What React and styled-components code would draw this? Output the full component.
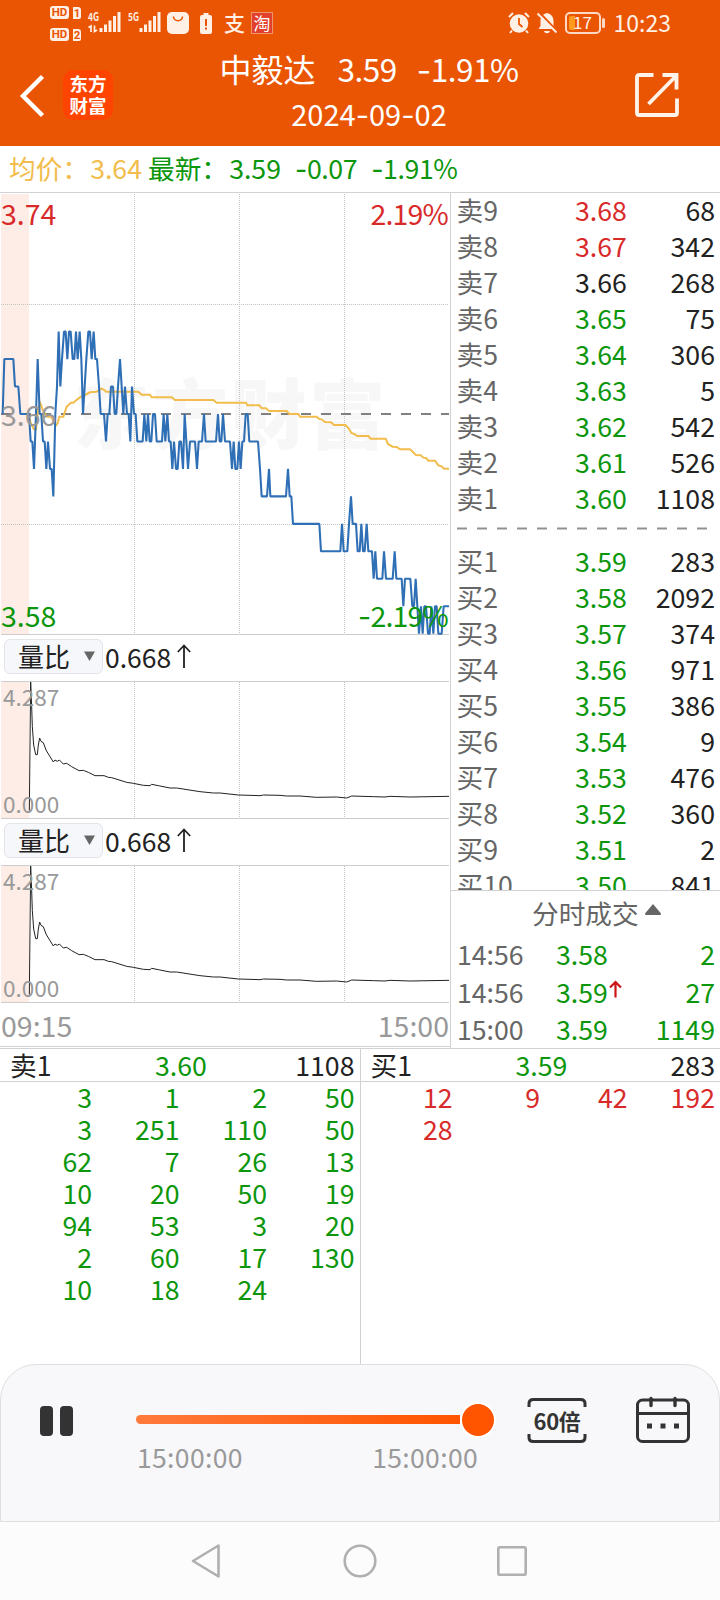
import styled, { createGlobalStyle } from "styled-components";

const GREEN = "#0c960c";
const RED = "#d92a2a";
const DARK = "#222222";
const GRAY = "#666666";
const LINE = "#d0d2d6";

const asks = [
  ["卖9", "3.68", "68", RED],
  ["卖8", "3.67", "342", RED],
  ["卖7", "3.66", "268", DARK],
  ["卖6", "3.65", "75", GREEN],
  ["卖5", "3.64", "306", GREEN],
  ["卖4", "3.63", "5", GREEN],
  ["卖3", "3.62", "542", GREEN],
  ["卖2", "3.61", "526", GREEN],
  ["卖1", "3.60", "1108", GREEN],
];

const bids = [
  ["买1", "3.59", "283", GREEN],
  ["买2", "3.58", "2092", GREEN],
  ["买3", "3.57", "374", GREEN],
  ["买4", "3.56", "971", GREEN],
  ["买5", "3.55", "386", GREEN],
  ["买6", "3.54", "9", GREEN],
  ["买7", "3.53", "476", GREEN],
  ["买8", "3.52", "360", GREEN],
  ["买9", "3.51", "2", GREEN],
  ["买10", "3.50", "841", GREEN],
];

const trades = [
  { time: "14:56", price: "3.58", volume: "2" },
  { time: "14:56", price: "3.59", volume: "27", up: true },
  { time: "15:00", price: "3.59", volume: "1149" },
];

const sellQueue = [
  "3", "1", "2", "50",
  "3", "251", "110", "50",
  "62", "7", "26", "13",
  "10", "20", "50", "19",
  "94", "53", "3", "20",
  "2", "60", "17", "130",
  "10", "18", "24",
];

const buyQueue = ["12", "9", "42", "192", "28"];

// x : last two digits of the price
const priceSeries = `8:66 13:68 40:68 45:67 55:67 61:66 87:66 92:65 97:65 102:64 108:66 113:68 119:66 124:66
129:65 134:65 139:64 144:65 150:64 155:64 160:63 166:66 171:67 176:69 181:67 186:68 192:69 197:69 202:68 207:69
212:69 218:68 223:68 228:69 233:68 239:69 244:68 249:66 254:67 259:68 265:69 270:69 275:68 281:69 286:68 291:68
297:67 302:66 312:66 318:65 323:66 328:66 333:67 339:67 344:66 349:66 354:67 360:68 365:67 370:66 375:67 381:66
386:66 391:65 396:67 402:66 407:66 412:65 428:65 433:66 439:65 444:66 449:65 454:65 459:66 465:66 470:65 486:65
491:66 496:65 502:66 507:65 512:65 517:64 522:65 528:64 533:64 538:65 543:65 549:64 554:66 559:65 564:64 570:65
585:65 591:64 596:65 606:65 612:66 617:65 648:65 654:66 659:65 664:65 669:66 675:65 690:65 696:64 701:65 706:64
712:64 717:65 722:64 727:65 732:65 737:66 743:66 748:65 774:65 780:64 785:63 801:63 807:64 811:63 858:63 864:64
869:63 874:63 879:62 958:62 963:61 1021:61 1026:62 1031:61 1042:61 1047:62 1053:63 1058:62 1068:62 1073:61
1079:61 1084:62 1089:61 1094:61 1100:62 1105:61 1116:61 1121:60 1126:61 1131:60 1147:60 1152:61 1158:60 1178:60
1184:61 1189:60 1205:60 1210:59 1215:60 1231:60 1237:59 1242:59 1247:60 1252:59 1257:58 1263:59 1268:58 1273:59
1278:59 1284:58 1289:58 1294:59 1300:58 1305:59 1310:59 1315:58 1325:58 1331:59 1347:59`;

const pricePoints = priceSeries
  .split(/\s+/)
  .map((p) => {
    const [x, cents] = p.split(":").map(Number);
    return `${x},${672 + (66 - cents) * 82.4}`;
  })
  .join(" ");

const averagePoints = `87,672 92,700 102,718 108,718 115,655 121,640 130,665 140,680 155,682 160,695 168,706 173,700
178,680 190,680 195,665 200,650 213,638 220,638 232,628 240,622 255,615 270,607 290,605 298,600 305,596 313,600
318,605 415,605 425,614 450,614 455,622 515,622 525,630 640,630 650,638 738,638 742,646 778,646 785,655 798,655
807,663 860,663 868,672 895,672 900,680 950,680 958,687 965,688 975,696 993,697 1002,705 1036,705 1046,715
1054,729 1065,733 1072,738 1105,738 1112,746 1157,746 1164,762 1178,770 1190,771 1200,778 1230,778 1248,795
1262,796 1270,803 1278,804 1285,812 1305,812 1315,826 1325,829 1332,836 1347,836`;

const ratioPoints = `88,542 92,156 95,230 97,290 101,345 107,374 112,374 115,345 119,324 123,334 130,338 138,360
150,380 160,396 165,390 172,394 178,390 190,402 200,400 215,410 237,422 250,421 265,427 285,437 312,437 325,442
335,443 380,457 400,460 430,466 450,467 455,463 475,467 510,474 530,474 600,485 640,489 660,489 715,495 780,497
790,495 840,496 860,498 900,498 950,502 1010,501 1040,504 1055,498 1120,500 1155,501 1170,499 1230,501 1347,499`;

const gridX = [403.5, 718.5, 1033.5];

const Signal = ({ label, data }) => (
  <svg width="34" height="24" viewBox="0 0 34 24">
    <text x="0" y="9.500" fontSize="11" fontWeight="700" fill="#fff0e6" textLength="11" lengthAdjust="spacingAndGlyphs">
      {label}
    </text>
    <g fill="#fff0e6">
      <rect x="11.500" y="17" width="3" height="4" />
      <rect x="16" y="13.500" width="3" height="7.500" />
      <rect x="20.500" y="9.500" width="3" height="11.500" />
      <rect x="25" y="5" width="3" height="16" />
      <rect x="29.500" y="1" width="3" height="20" />
    </g>
    {data && <path d="M.5 16.500l2.500-1.500v6M6.500 14.500v6l2.500-1.500" fill="none" stroke="#fff0e6" strokeWidth="1.700" />}
  </svg>
);

const StatusIcons = () => (
  <StatusLeft>
    <HdGroup>
      {["1", "2"].map((n) => (
        <HdRow key={n}>
          <HdBadge>HD</HdBadge>
          <HdNumber>{n}</HdNumber>
        </HdRow>
      ))}
    </HdGroup>
    <Signal label="4G" data />
    <SecondSignal>
      <Signal label="5G" />
    </SecondSignal>
    <svg width="22" height="22" viewBox="0 0 22 22">
      <rect width="22" height="22" rx="5" fill="#fff0e6" />
      <path d="M6.500 4.500a4.500 4.200 0 0 0 9 0" fill="none" stroke="#ea5504" strokeWidth="1.600" />
    </svg>
    <BatteryAlert width="12" height="21" viewBox="0 0 12 21">
      <path d="M3.500 0h5v2H10a2 2 0 0 1 2 2v15a2 2 0 0 1-2 2H2a2 2 0 0 1-2-2V4a2 2 0 0 1 2-2h1.500z" fill="#fff0e6" />
      <path d="M6 6v7M6 14.500v2" stroke="#ea5504" strokeWidth="2" />
    </BatteryAlert>
    <PayMark>支</PayMark>
    <TaoMark>淘</TaoMark>
  </StatusLeft>
);

const StatusRightIcons = () => (
  <StatusRight>
    <svg width="22" height="22" viewBox="0 0 22 22">
      <circle cx="11" cy="11.500" r="9.300" fill="#fff0e6" />
      <path d="M1 5l4-4M21 5l-4-4M4 18.500l-2 2.500M18 18.500l2 2.500" stroke="#fff0e6" strokeWidth="2" />
      <path d="M11 6v6l3.500 3" fill="none" stroke="#ea5504" strokeWidth="1.800" />
    </svg>
    <BellOff width="20" height="22" viewBox="0 0 20 22">
      <path d="M10 1c4 1 6.500 3.500 6.500 8v5l2 3H1.500l2-3V9C3.500 4.500 6 2 10 1zM7 19h6c-.5 3-5.500 3-6 0z" fill="#fff0e6" />
      <path d="M2 0l18 19" stroke="#ea5504" strokeWidth="2" />
      <path d="M.5 1.500l19 19" stroke="#fff0e6" strokeWidth="1.800" />
    </BellOff>
    <BatteryShell>
      <BatteryFill />
      <span>17</span>
    </BatteryShell>
    <BatteryTip />
    <Clock>10:23</Clock>
  </StatusRight>
);

const RatioChart = () => (
  <>
    <IndicatorBar>
      <IndicatorPill>
        量比
        <svg width="11" height="10" viewBox="0 0 11 10">
          <path d="M0 .5h11L5.500 10z" fill="#666" />
        </svg>
      </IndicatorPill>
      0.668
      <UpArrow width="14" height="25" viewBox="0 0 14 25">
        <path d="M7 24V1.500M.8 8L7 1.500 13.200 8" fill="none" stroke="#222" strokeWidth="1.800" />
      </UpArrow>
    </IndicatorBar>
    <RatioBox>
      <Plot width="450" height="138" viewBox="0 153 1350 414">
        <rect x="3" y="154" width="84" height="411" fill="#fdede6" />
        <path d="M3 154.500H1347M3 565.500H1347" stroke="#cdcdcd" strokeWidth="3" />
        {gridX.map((x) => (
          <path key={x} d={`M${x} 156V565`} stroke="#c4c4c4" strokeWidth="3" strokeDasharray="3 3" />
        ))}
        <polyline points={ratioPoints} fill="none" stroke="#222" strokeWidth="3" />
      </Plot>
      <SmallLabel $top="2px">4.287</SmallLabel>
      <SmallLabel $top="109px">0.000</SmallLabel>
    </RatioBox>
  </>
);

const BookRows = ({ rows }) =>
  rows.map(([name, price, volume, color]) => (
    <BookRow key={name}>
      <BookName>{name}</BookName>
      <Price $color={color}>{price}</Price>
      <Volume>{volume}</Volume>
    </BookRow>
  ));

const Queue = ({ name, price, volume, items, color }) => (
  <QueueSide>
    <QueueHead>
      <span>{name}</span>
      <Price $color={GREEN}>{price}</Price>
      <Volume>{volume}</Volume>
    </QueueHead>
    <QueueGrid $color={color}>
      {items.map((v, i) => (
        <span key={i}>{v}</span>
      ))}
    </QueueGrid>
  </QueueSide>
);

const App = () => (
  <Screen>
    <GlobalStyle />
    <Header>
      <StatusBar>
        <StatusIcons />
        <StatusRightIcons />
      </StatusBar>
      <TitleBar>
        <BackIcon width="24" height="42" viewBox="0 0 24 42">
          <path d="M22.500 1.500L3 21l19.500 19.500" fill="none" stroke="#fff" strokeWidth="4.400" />
        </BackIcon>
        <Logo>
          <span>东方</span>
          <span>财富</span>
        </Logo>
        <Titles>
          <Title>
            <TitleName>中毅达</TitleName>
            <span>3.59</span>
            <span>
              <Minus>-</Minus>1.91%
            </span>
          </Title>
          <DateText>
            2024<Minus>-</Minus>09<Minus>-</Minus>02
          </DateText>
        </Titles>
        <svg width="44" height="44" viewBox="0 0 44 44">
          <path d="M18.500 2H4a2 2 0 0 0-2 2v36a2 2 0 0 0 2 2h36a2 2 0 0 0 2-2V25.500" fill="none" stroke="#fff3ea" strokeWidth="3.800" />
          <path d="M27.500 2H41.500V16.500M41 3L13.500 31" fill="none" stroke="#fff3ea" strokeWidth="3.800" />
        </svg>
      </TitleBar>
    </Header>

    <Summary>
      <Average>
        均价：<b>3.64</b>
      </Average>
      <Latest>
        最新：<b>3.59</b>
      </Latest>
      <Change>
        <Minus>-</Minus>0.07
      </Change>
      <Change>
        <Minus>-</Minus>1.91%
      </Change>
    </Summary>

    <Main>
      <Charts>
        <PriceBox>
          <Plot width="450" height="442" viewBox="0 9 1350 1326">
            <rect x="3" y="12" width="84" height="1321" fill="#fdede6" />
            <text x="220" y="760" fontSize="228" fontWeight="900" fill="#f7f7f7" textLength="936">
              东方财富
            </text>
            {gridX.map((x) => (
              <path key={x} d={`M${x} 12V1332`} stroke="#c4c4c4" strokeWidth="3" strokeDasharray="3 3" />
            ))}
            <path d="M3 343.500H1347M3 1003.500H1347" stroke="#c4c4c4" strokeWidth="3" strokeDasharray="3 3" />
            <path d="M3 1333.500H1347" stroke="#cdcdcd" strokeWidth="3" />
            <path d="M3 672H1347" stroke="#808080" strokeWidth="5.500" strokeDasharray="30 30" />
            <polyline points={averagePoints} fill="none" stroke="#f2bd4c" strokeWidth="6" />
            <polyline points={pricePoints} fill="none" stroke="#2f6fb5" strokeWidth="6.200" strokeLinejoin="bevel" />
          </Plot>
          <AxisLabel $top="0" $color={RED}>3.74</AxisLabel>
          <AxisLabel $top="0" $color={RED} $right>2.19%</AxisLabel>
          <AxisLabel $top="201px" $color="#999">3.66</AxisLabel>
          <AxisLabel $top="402px" $color={GREEN}>3.58</AxisLabel>
          <AxisLabel $top="402px" $color={GREEN} $right>
            <Minus>-</Minus>2.19%
          </AxisLabel>
        </PriceBox>
        <RatioChart />
        <RatioChart />
        <TimeAxis>
          <span>09:15</span>
          <span>15:00</span>
        </TimeAxis>
      </Charts>

      <Side>
        <Book>
          <BookRows rows={asks} />
          <BookDivider width="250" height="27" viewBox="0 0 250 27">
            <path d="M0 11.500H250" stroke="#909090" strokeWidth="2" strokeDasharray="10 10" />
          </BookDivider>
          <BookRows rows={bids} />
        </Book>
        <Trades>
          <TradesTitle>
            分时成交
            <svg width="16" height="17" viewBox="0 0 16 17">
              <path d="M8 0l8 9.500q0 1.500-1 1.500H1q-1 0-1-1.500z" fill="#666" />
            </svg>
          </TradesTitle>
          {trades.map((t, i) => (
            <TradeRow key={i}>
              <BookName>{t.time}</BookName>
              <Price $color={GREEN}>
                {t.price}
                {t.up && (
                  <TradeArrow width="13" height="18" viewBox="0 0 13 18">
                    <path d="M6.500 17.500V2M1 7.500l5.500-5.500L12 7.500" fill="none" stroke="#cc1515" strokeWidth="2.200" />
                  </TradeArrow>
                )}
              </Price>
              <Volume $color={GREEN}>{t.volume}</Volume>
            </TradeRow>
          ))}
        </Trades>
      </Side>
    </Main>

    <Queues>
      <Queue name="卖1" price="3.60" volume="1108" items={sellQueue} color={GREEN} />
      <Queue name="买1" price="3.59" volume="283" items={buyQueue} color={RED} />
    </Queues>

    <Player>
      <PauseButton>
        <i />
        <i />
      </PauseButton>
      <Progress>
        <Track>
          <Thumb />
        </Track>
        <ProgressTimes>
          <span>15:00:00</span>
          <span>15:00:00</span>
        </ProgressTimes>
      </Progress>
      <SpeedButton>
        <svg width="60" height="10" viewBox="0 0 60 10">
          <path d="M2 10V6.500q0-4 4.500-4h47q4.500 0 4.500 4V10" fill="none" stroke="#333" strokeWidth="3" />
        </svg>
        <span>60倍</span>
        <svg width="60" height="10" viewBox="0 0 60 10">
          <path d="M2 0v3.500q0 4 4.500 4h47q4.500 0 4.500-4V0" fill="none" stroke="#333" strokeWidth="3" />
        </svg>
      </SpeedButton>
      <CalendarIcon width="56" height="50" viewBox="0 0 56 50">
        <rect x="2.500" y="4" width="51" height="41.500" rx="5" fill="none" stroke="#333" strokeWidth="3" />
        <path d="M2.500 17.500h51" stroke="#333" strokeWidth="3" />
        <path d="M16 2.500v7M40 2.500v7" stroke="#333" strokeWidth="3.400" strokeLinecap="round" />
        <path d="M12 30h5M25.500 30h5M39 30h5" stroke="#333" strokeWidth="5" />
      </CalendarIcon>
    </Player>

    <NavBar>
      <svg width="30" height="36" viewBox="0 0 30 36">
        <path d="M28.500 2.500v31L3 18z" fill="none" stroke="#b0b0b0" strokeWidth="2.600" strokeLinejoin="round" />
      </svg>
      <svg width="34" height="34" viewBox="0 0 34 34">
        <circle cx="18" cy="17" r="15.300" fill="none" stroke="#b0b0b0" strokeWidth="2.600" />
      </svg>
      <svg width="30" height="30" viewBox="0 0 30 30">
        <rect x="1.300" y="1.300" width="27.400" height="27.400" rx="1.500" fill="none" stroke="#b0b0b0" strokeWidth="2.600" />
      </svg>
    </NavBar>
  </Screen>
);

const GlobalStyle = createGlobalStyle`
  * {
    box-sizing: border-box;
  }
  body {
    margin: 0;
    background: #fff;
    font-family: "Noto Sans CJK SC", sans-serif;
  }
  svg {
    display: block;
    flex-shrink: 0;
    overflow: visible;
  }
  b {
    font-weight: 400;
  }
`;

const Screen = styled.div`
  display: flex;
  flex-direction: column;
  width: 720px;
  height: 1600px;
  overflow: hidden;
  color: ${DARK};
  font-size: 26.7px;
`;

const Minus = styled.span`
  display: inline-block;
  font-family: Inter, sans-serif;
  line-height: 1;
`;

const Header = styled.header`
  height: 146px;
  background: #ea5504;
  color: #fff;
  flex-shrink: 0;
`;

const StatusBar = styled.div`
  display: flex;
  justify-content: space-between;
  height: 46px;
  padding: 0 49px;
  color: #fff0e6;
`;

const StatusLeft = styled.div`
  display: flex;
  align-items: center;
`;

const HdGroup = styled.div`
  display: flex;
  flex-direction: column;
  gap: 9px;
  width: 38px;
  margin: 1px 0 0 1px;
`;

const HdRow = styled.div`
  display: flex;
  align-items: center;
  gap: 4px;
  font-size: 11.5px;
  font-weight: 700;
  font-family: Roboto, sans-serif;
  color: #ea5504;
`;

const HdBadge = styled.span`
  width: 19px;
  height: 13px;
  border-radius: 3px;
  background: #fff0e6;
  line-height: 13px;
  text-align: center;
`;

const HdNumber = styled.span`
  width: 8px;
  height: 12px;
  border-radius: 0 3px 2px 0;
  background: #fff0e6;
  line-height: 12px;
  text-align: center;
`;

const SecondSignal = styled.div`
  margin: 0 5px 0 6px;
`;

const BatteryAlert = styled.svg`
  margin-left: 11px;
`;

const PayMark = styled.span`
  margin: -2px 0 0 12px;
  font-size: 21px;
  line-height: 24px;
  font-weight: 500;
`;

const TaoMark = styled.span`
  width: 22px;
  height: 22px;
  margin-left: 6px;
  background: #e0402c;
  border: 1px solid #f0946c;
  color: #fff;
  font-size: 17px;
  line-height: 19px;
  text-align: center;
`;

const StatusRight = styled.div`
  display: flex;
  align-items: center;
`;

const BellOff = styled.svg`
  margin: 0 8px 0 7px;
`;

const BatteryShell = styled.div`
  position: relative;
  width: 36px;
  height: 22px;
  border: 2px solid #fdd9c4;
  border-radius: 5px;
  font-size: 17px;
  line-height: 16px;
  text-align: center;

  span {
    position: relative;
  }
`;

const BatteryFill = styled.i`
  position: absolute;
  left: 2px;
  top: 2px;
  width: 6px;
  height: 14px;
  border-radius: 2px 0 0 2px;
  background: #ff9a1c;
`;

const BatteryTip = styled.i`
  width: 3px;
  height: 10px;
  margin-left: 1px;
  border-radius: 2px;
  background: #fdd9c4;
`;

const Clock = styled.span`
  margin-left: 9px;
  font-size: 23px;
  line-height: 40px;
  padding-bottom: 2px;
`;

const TitleBar = styled.div`
  display: flex;
  align-items: center;
  height: 98px;
  padding: 0 41px 0 20px;
`;

const BackIcon = styled.svg`
  margin-top: 1px;
`;

const Logo = styled.div`
  display: flex;
  flex-direction: column;
  align-items: center;
  width: 50px;
  height: 50px;
  margin-left: 19px;
  padding-top: 2px;
  border-radius: 10px;
  background: #ff4400;
  font-size: 18.5px;
  line-height: 22px;
  font-weight: 700;
`;

const Titles = styled.div`
  display: flex;
  flex: 1;
  flex-direction: column;
  align-items: center;
  padding: 0 10px 9px 0;
`;

const Title = styled.div`
  display: flex;
  gap: 20px;
  font-size: 31.5px;
  line-height: 45px;
  letter-spacing: -0.5px;
`;

const TitleName = styled.span`
  margin-right: 2px;
  font-size: 32px;
  letter-spacing: 0;
`;

const DateText = styled.div`
  font-size: 29px;
  line-height: 44px;
`;

const Summary = styled.div`
  display: flex;
  height: 47px;
  padding-left: 9px;
  border-bottom: 1px solid ${LINE};
  line-height: 44px;
  flex-shrink: 0;
  color: ${GREEN};
`;

const Average = styled.span`
  display: flex;
  justify-content: space-between;
  width: 133px;
  color: #f2bd4c;
`;

const Latest = styled.span`
  display: flex;
  justify-content: space-between;
  width: 133px;
  margin-left: 6px;
`;

const Change = styled.span`
  margin-left: 14px;
  letter-spacing: -0.4px;
`;

const Main = styled.main`
  display: flex;
  height: 856px;
  border-bottom: 1px solid ${LINE};
  flex-shrink: 0;
`;

const Charts = styled.section`
  width: 450px;
`;

const Plot = styled.svg`
  display: block;
  overflow: hidden;
`;

const PriceBox = styled.div`
  position: relative;
  height: 442px;
`;

const AxisLabel = styled.span`
  position: absolute;
  top: ${({ $top }) => $top};
  ${({ $right }) => ($right ? "right: 2px; letter-spacing: -0.8px;" : "left: 1px;")}
  color: ${({ $color }) => $color};
  font-size: 28.5px;
  line-height: 40px;
`;

const IndicatorBar = styled.div`
  display: flex;
  align-items: center;
  height: 46px;
  padding: 0 0 3px 4px;
  font-size: 26.5px;
  line-height: 39px;
`;

const IndicatorPill = styled.div`
  display: flex;
  align-items: center;
  justify-content: space-between;
  width: 99px;
  height: 35px;
  margin-right: 2px;
  padding: 0 7px 1px 13px;
  border: 1px solid #e2e4e8;
  border-radius: 6px;
  background: #f6f7fa;
  font-size: 26px;
  line-height: 30px;
`;

const UpArrow = styled.svg`
  margin-left: 6px;
`;

const RatioBox = styled.div`
  position: relative;
  height: 138px;
`;

const SmallLabel = styled.span`
  position: absolute;
  top: ${({ $top }) => $top};
  left: 3px;
  color: #999;
  font-size: 22.5px;
  line-height: 26px;
`;

const TimeAxis = styled.div`
  display: flex;
  justify-content: space-between;
  height: 44px;
  padding: 0 1px;
  border-bottom: 1px solid ${LINE};
  color: #999;
  font-size: 28.5px;
  line-height: 43px;
`;

const Side = styled.aside`
  display: flex;
  flex: 1;
  flex-direction: column;
  border-left: 1px solid ${LINE};
`;

const Book = styled.div`
  height: 698px;
  overflow: hidden;
  border-bottom: 1px solid ${LINE};
`;

const BookRow = styled.div`
  display: grid;
  grid-template-columns: 118.5px 60px 1fr;
  height: 36px;
  padding: 0 5px 0 5.5px;
  line-height: 34px;
`;

const BookName = styled.span`
  color: ${GRAY};
`;

const Price = styled.span`
  display: flex;
  color: ${({ $color }) => $color};
`;

const Volume = styled.span`
  color: ${({ $color }) => $color || DARK};
  text-align: right;
`;

const BookDivider = styled.svg`
  margin-left: 6px;
`;

const Trades = styled.div`
  padding-top: 1px;
`;

const TradesTitle = styled.div`
  display: flex;
  align-items: center;
  gap: 6px;
  height: 40px;
  margin-bottom: 2px;
  padding-left: 81px;
  color: ${GRAY};
`;

const TradeRow = styled.div`
  display: grid;
  grid-template-columns: 99px 80px 1fr;
  height: 37.500px;
  padding: 0 5px 0 6px;
  line-height: 39px;
`;

const TradeArrow = styled.svg`
  margin: 8px 0 0 1px;
`;

const Queues = styled.section`
  display: flex;
  height: 315px;
  flex-shrink: 0;
`;

const QueueSide = styled.div`
  flex: 1;
  & + & {
    border-left: 1px solid ${LINE};
  }
`;

const QueueHead = styled.div`
  display: grid;
  grid-template-columns: 145px 60px 1fr;
  height: 33px;
  padding: 0 5px 0 10px;
  border-bottom: 1px solid ${LINE};
  line-height: 32px;
`;

const QueueGrid = styled.div`
  display: grid;
  grid-template-columns: repeat(4, 87.500px);
  justify-content: end;
  padding: 0 5px 0 0;
  color: ${({ $color }) => $color};
  line-height: 32px;
  text-align: right;
  margin-top: -1px;
`;

const Player = styled.section`
  display: flex;
  height: 158px;
  padding-left: 39px;
  border: 1px solid #dedfe1;
  border-radius: 36px 36px 0 0;
  background: #f8f8fa;
  flex-shrink: 0;
`;

const PauseButton = styled.div`
  display: flex;
  gap: 7px;
  width: 96px;
  padding-top: 41px;

  i {
    width: 13px;
    height: 30px;
    border-radius: 4px;
    background: #333;
  }
`;

const Progress = styled.div`
  width: 342px;
  padding-top: 50px;
`;

const Track = styled.div`
  position: relative;
  width: 324px;
  height: 9px;
  border-radius: 5px 0 0 5px;
  background: linear-gradient(90deg, #ff7a3c, #ff5500);
`;

const Thumb = styled.i`
  position: absolute;
  right: -36px;
  top: -13px;
  width: 36px;
  height: 36px;
  border: 2px solid #fff;
  border-radius: 50%;
  background: #ff5500;
`;

const ProgressTimes = styled.div`
  display: flex;
  justify-content: space-between;
  margin: 15px 0 0 1px;
  color: #999;
  font-size: 26.5px;
  line-height: 36px;
  letter-spacing: 0.35px;
`;

const SpeedButton = styled.div`
  display: flex;
  flex-direction: column;
  width: 60px;
  margin: 32px 0 0 49px;

  span {
    height: 27px;
    font-size: 22px;
    line-height: 27px;
    font-weight: 700;
    color: #333;
    text-align: center;
    letter-spacing: -0.3px;
  }
`;

const CalendarIcon = styled.svg`
  margin: 31px 0 0 48px;
`;

const NavBar = styled.nav`
  display: flex;
  flex: 1;
  align-items: center;
  justify-content: space-between;
  padding: 0 193px 0 190px;
  background: #fcfcfc;
`;

export default App;
